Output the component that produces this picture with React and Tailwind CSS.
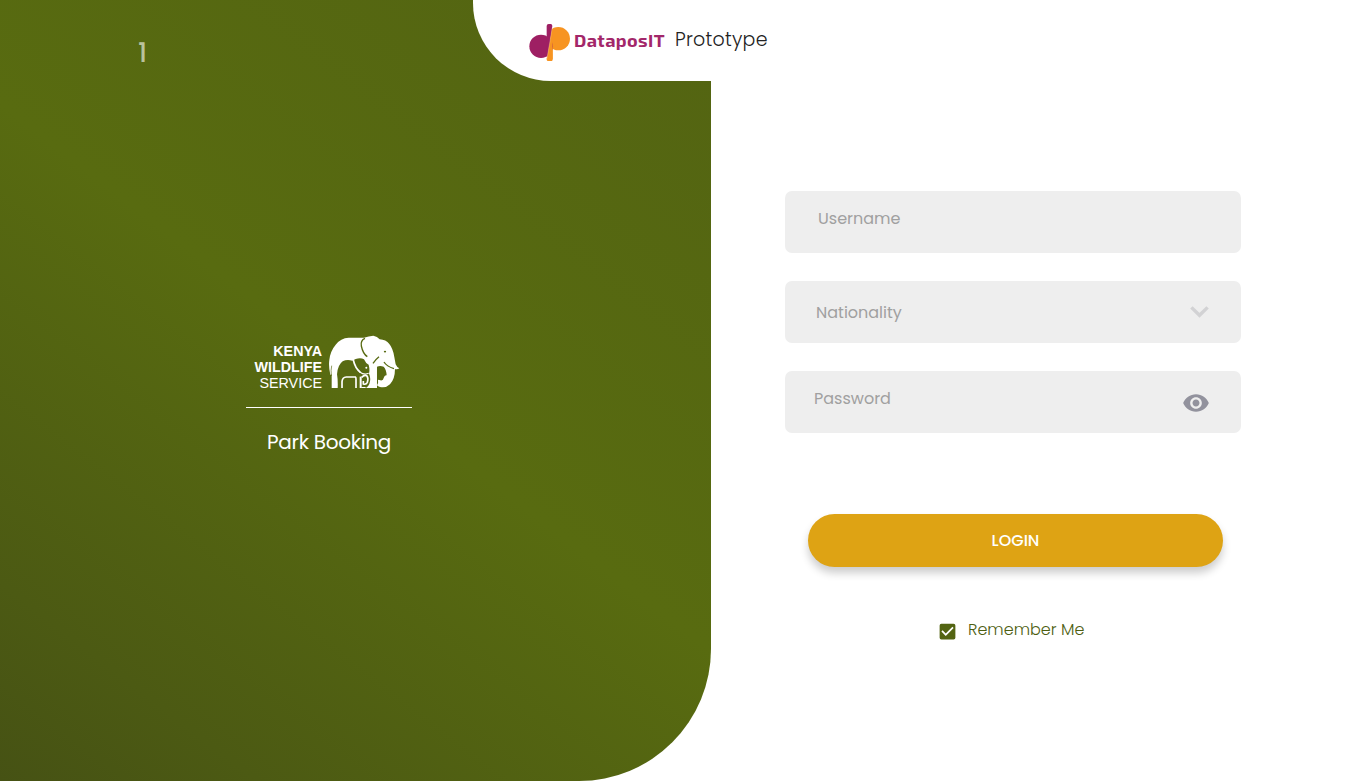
import React from "react";
import { MdVisibility, MdCheckBox } from "react-icons/md";

function ElephantMark() {
  return (
    <svg viewBox="264 30 216 160" className="h-[53.3px] w-[72px] shrink-0" aria-hidden="true">
      <path
        fill="#fff"
        d="M275 189V148L271 150Q265 124 268 104Q271 78 287 59Q302 39 326 38H372Q386 33 400 32Q412 34 419 43Q438 44 448 57Q459 70 463 96L467 118Q470 126 478 130Q472 134 465 132Q465 162 450 178Q438 190 420 186Q414 185 411 181V189Z"
      />
      <path
        fill="#586a12"
        d="M293 190Q294 165 291 148Q293 120 308 109Q320 103 337 107L347 102Q362 97 372 103Q377 115 386 119Q390 134 387 146Q394 160 388 177Q384 187 376 190Z"
      />
      <g fill="none" stroke="#fff" strokeWidth="5">
        <path d="M306 190V170Q307 157 319 156H346Q348 157 348 163V190" />
        <path d="M362 190V155" strokeWidth="6" />
        <path d="M365 157Q374 148 381 153Q386 160 382 172Q378 180 370 177V168" />
        <path d="M340 105Q345 129 361 142" />
        <path d="M359 141Q373 151 386 145" strokeWidth="3.5" />
      </g>
      <path fill="none" stroke="#fff" strokeWidth="4" d="M364 188H377" />
      <circle cx="379" cy="128" r="3" fill="#fff" />
      <path fill="#586a12" d="M411 181V125Q420 121 431 125Q439 133 440 151Q434 149 431 159Q430 168 421 166Q419 164 414 164Q416 174 411 181Z" />
      <path fill="none" stroke="#586a12" strokeWidth="4" d="M375 40Q361 46 364 63Q369 87 382 95M399 115Q407 103 417 95" />
      <path fill="none" stroke="#586a12" strokeWidth="4" d="M432 111Q440 124 462 131" />
      <path fill="none" stroke="#586a12" strokeWidth="2" d="M274 153Q272 135 275 122" />
      <ellipse cx="435" cy="80" rx="3.5" ry="2.5" fill="#586a12" />
    </svg>
  );
}

function DataposMark() {
  return (
    <svg viewBox="0 0 123 112" className="h-[37.3px] w-[41px] shrink-0" aria-hidden="true">
      <circle cx="88" cy="44" r="35" fill="#f79421" />
      <path fill="#f79421" d="M68 10L53 105Q53 112 59 112H66Q71 112 71 106V65Z" />
      <circle cx="36" cy="67" r="35" fill="#9e1f63" />
      <path fill="#9e1f63" d="M53 6Q53 0 59 0H65Q70 0 70 6L56 98L50 96L53 40Z" />
      <path fill="#f79421" d="M70 12L71 106H53Z" />
      <path fill="none" stroke="#fff" strokeWidth="1" strokeOpacity="0.7" d="M70 10L54 104" />
    </svg>
  );
}

function Field({ children, className }) {
  return (
    <div className={`flex h-[62px] w-[456px] justify-between rounded-[7px] bg-[#eee] pr-8 text-[16px] leading-6 text-[#a0a0a0] ${className}`}>
      {children}
    </div>
  );
}

export default function App() {
  return (
    <div className="flex h-[781px] w-[1366px] overflow-hidden bg-white font-['Poppins','Inter',sans-serif]">
      <aside className="flex w-[711px] shrink-0 flex-col rounded-br-[132px] bg-[linear-gradient(37.6deg,#465214_0%,#4c5a13_15%,#586b10_51%,#536412_100%)]">
        <header className="flex h-[81px] justify-between">
          <span className="pt-[35px] pl-[138px] text-[26px] leading-9 font-medium text-white/60">1</span>
          <div className="flex w-[238px] rounded-bl-[78px] bg-white pl-14 whitespace-nowrap">
            <div className="pt-[24px]">
              <DataposMark />
            </div>
            <span className="w-[91px] pt-[28px] pl-1 font-['Exo_2','Open_Sans',sans-serif] text-[18px] leading-6 font-bold tracking-[0.4px] text-[#a3276a]">
              DataposIT
            </span>
            <span className="pt-[26px] pl-[14px] text-[19px] leading-7 font-light tracking-[0.25px] text-[#222]">Prototype</span>
          </div>
        </header>

        <section className="ml-[246px] flex w-[166px] flex-col items-center pt-[254px]">
          <div className="flex h-[53.3px] w-full gap-[6px] pl-[7px]">
            <div className="w-[69px] pt-[8px] text-right font-['Liberation_Sans',sans-serif] text-[14.3px] leading-4 font-bold whitespace-nowrap text-white">
              <div>KENYA</div>
              <div>WILDLIFE</div>
              <div className="font-normal">SERVICE</div>
            </div>
            <ElephantMark />
          </div>
          <div className="mt-[18.7px] h-px w-full bg-white" />
          <h1 className="mt-5 text-[20px] leading-7 font-normal tracking-[-0.3px] whitespace-nowrap text-white">Park Booking</h1>
        </section>
      </aside>

      <main className="flex flex-col pt-[191px] pl-[74px]">
        <div className="flex flex-col gap-7">
          <Field className="pt-[16px] pl-[33px]">
            <span>Username</span>
          </Field>
          <Field className="pt-[20px] pl-[31px]">
            <span>Nationality</span>
            <svg viewBox="0 0 19 12" className="mt-[5px] h-3 w-[19px]" aria-hidden="true">
              <path d="M1.4 1.4L9.5 9.3L17.6 1.4" fill="none" stroke="#d2d2d4" strokeWidth="3.4" />
            </svg>
          </Field>
          <Field className="pt-[16px] pl-[29px]">
            <span>Password</span>
            <MdVisibility className="mt-[2px] -mr-[0.5px] h-7 w-7 text-[#92929d]" />
          </Field>
        </div>
        <button className="mt-[81px] ml-[23px] h-[53px] w-[415px] rounded-full bg-[#dea314] text-[16px] font-medium text-white shadow-[0_6px_8px_rgba(0,0,0,0.2)]">
          LOGIN
        </button>
        <div className="mt-[51px] ml-[152px] flex gap-[10px]">
          <MdCheckBox className="mt-[3px] h-[21px] w-[21px] text-[#536412]" />
          <span className="text-[16px] leading-6 font-light text-[#4d5e10]">Remember Me</span>
        </div>
      </main>
    </div>
  );
}
